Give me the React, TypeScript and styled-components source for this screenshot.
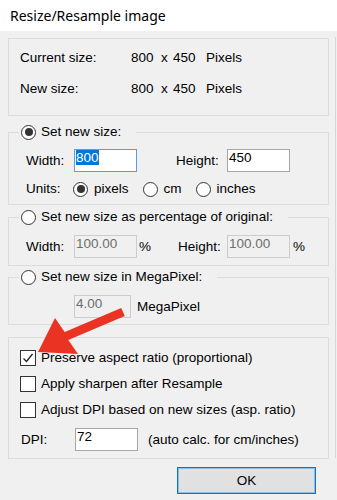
import React from "react";
import styled, { createGlobalStyle } from "styled-components";

const GlobalStyle = createGlobalStyle`
  html, body { margin: 0; padding: 0; background: #f0f0f0; }
  body {
    font-family: "Liberation Sans", Arial, sans-serif;
    font-size: 13.5px;
    color: #000;
  }
  * { box-sizing: border-box; }
`;

const Window = styled.div`
  position: relative;
  width: 337px;
  height: 500px;
  display: flex;
  flex-direction: column;
  background: #f0f0f0;
  overflow: hidden;
`;

const TitleBar = styled.div`
  height: 31px;
  flex: none;
  background: #fff;
  display: flex;
  align-items: center;
  padding-left: 10px;
  font-family: "Noto Sans", "Open Sans", sans-serif;
  font-size: 14px;
  color: #000;
`;

const Body = styled.div`
  display: flex;
  flex-direction: column;
  padding: 7px 0 0 8px;
`;

const Columns = styled.div`
  display: flex;
  align-items: stretch;
`;

const Stack = styled.div`
  width: 321px;
  display: flex;
  flex-direction: column;
`;

const Edge = styled.div`
  width: 1px;
  margin: -1px 0 1px 6px;
  background: #d6d6d6;
`;

const Box = styled.div<{ $mt?: number }>`
  border: 1px solid #dcdcdc;
  margin-top: ${(p) => p.$mt ?? 0}px;
`;

const InfoBox = styled(Box)`
  height: 78px;
  padding: 11px 0 0 11px;
  display: grid;
  grid-template-columns: 111px 30px 12px 33px auto;
  grid-auto-rows: 16px;
  row-gap: 15px;
  line-height: 16px;
  align-content: start;
`;

const Group = styled.fieldset<{ $mt: number }>`
  margin: ${(p) => p.$mt}px 0 0 0;
  padding: 0;
  border: 1px solid #dcdcdc;
  min-width: 0;
`;

const Legend = styled.legend`
  margin-left: 10px;
  padding: 0 15px 0 2px;
  height: 16px;
  line-height: 16px;
`;

const LegendInner = styled.span`
  display: flex;
  align-items: center;
  gap: 5px;
  height: 16px;
`;

const GroupContent = styled.div<{ $pb: number }>`
  padding: 0 0 ${(p) => p.$pb}px 17px;
`;

const FieldRow = styled.div<{ $mt: number }>`
  display: flex;
  align-items: center;
  height: 23px;
  margin-top: ${(p) => p.$mt}px;
  line-height: 16px;
`;

const OptionRow = styled.div<{ $mt: number }>`
  display: flex;
  align-items: center;
  height: 16px;
  line-height: 16px;
  margin-top: ${(p) => p.$mt}px;
`;

const Label = styled.span<{ $w?: number; $ml?: number }>`
  flex: none;
  width: ${(p) => (p.$w ? `${p.$w}px` : "auto")};
  margin-left: ${(p) => p.$ml ?? 0}px;
  white-space: nowrap;
`;

const TextField = styled.div<{ $w: number; $disabled?: boolean; $focused?: boolean }>`
  flex: none;
  width: ${(p) => p.$w}px;
  height: 23px;
  padding: 0 0 0 1px;
  line-height: 16px;
  border: 1px solid
    ${(p) => (p.$focused ? "#5b9ee0" : p.$disabled ? "#cccccc" : "#a6a6a6")};
  background: ${(p) => (p.$disabled ? "#f0f0f0" : "#ffffff")};
  color: ${(p) => (p.$disabled ? "#6d6d6d" : "#000")};
  white-space: nowrap;
`;

const Selected = styled.span`
  background: #0078d7;
  color: #fff;
`;

const Option = styled.label<{ $mr?: number }>`
  display: flex;
  align-items: center;
  gap: 6px;
  margin-right: ${(p) => p.$mr ?? 0}px;
`;

const Radio = styled.span<{ $checked?: boolean }>`
  flex: none;
  width: 15px;
  height: 15px;
  border-radius: 50%;
  border: 1px solid #333;
  background: #fff;
  display: flex;
  align-items: center;
  justify-content: center;
  &::after {
    content: "";
    display: ${(p) => (p.$checked ? "block" : "none")};
    width: 8px;
    height: 8px;
    border-radius: 50%;
    background: #333;
  }
`;

const CheckBox = styled.span`
  flex: none;
  width: 16px;
  height: 16px;
  border: 1px solid #333;
  background: #fff;
  display: flex;
  align-items: center;
  justify-content: center;
`;

const CheckRow = styled.label<{ $mt: number }>`
  display: flex;
  align-items: center;
  gap: 5px;
  height: 16px;
  line-height: 16px;
  margin-top: ${(p) => p.$mt}px;
`;

const OptionsBox = styled(Box)`
  padding: 12px 0 7px 11px;
`;

const Footer = styled.div`
  width: 321px;
  display: flex;
  justify-content: flex-end;
  padding-right: 13px;
  margin-top: 8px;
`;

const Button = styled.button`
  width: 139px;
  height: 27px;
  background: #e1e1e1;
  border: 1px solid #0078d7;
  box-shadow: inset 0 0 0 1px rgba(0, 120, 215, 0.35);
  font-family: "Liberation Sans", Arial, sans-serif;
  font-size: 13.5px;
  color: #000;
  padding: 0;
`;

const ArrowSvg = styled.svg`
  position: absolute;
  left: 30px;
  top: 300px;
  pointer-events: none;
`;

function Check({ checked }: { checked?: boolean }) {
  return (
    <CheckBox>
      {checked && (
        <svg width="14" height="14" viewBox="0 0 14 14">
          <polyline
            points="2.5,7.5 5.5,10.5 11.5,3"
            fill="none"
            stroke="#222"
            strokeWidth="1.3"
          />
        </svg>
      )}
    </CheckBox>
  );
}

export default function App() {
  return (
    <>
      <GlobalStyle />
      <Window>
        <TitleBar>Resize/Resample image</TitleBar>
        <Body>
          <Columns>
            <Stack>
              <InfoBox>
                <span>Current size:</span>
                <span>800</span>
                <span>x</span>
                <span>450</span>
                <span>Pixels</span>
                <span>New size:</span>
                <span>800</span>
                <span>x</span>
                <span>450</span>
                <span>Pixels</span>
              </InfoBox>

              <Group $mt={8}>
                <Legend>
                  <LegendInner>
                    <Radio $checked />
                    Set new size:
                  </LegendInner>
                </Legend>
                <GroupContent $pb={7}>
                  <FieldRow $mt={9}>
                    <Label $w={48}>Width:</Label>
                    <TextField $w={63} $focused>
                      <Selected>800</Selected>
                    </TextField>
                    <Label $w={51} $ml={39}>Height:</Label>
                    <TextField $w={63}>450</TextField>
                  </FieldRow>
                  <OptionRow $mt={9}>
                    <Label $w={47}>Units:</Label>
                    <Option $mr={14}>
                      <Radio $checked />
                      pixels
                    </Option>
                    <Option $mr={14}>
                      <Radio />
                      cm
                    </Option>
                    <Option>
                      <Radio />
                      inches
                    </Option>
                  </OptionRow>
                </GroupContent>
              </Group>

              <Group $mt={4}>
                <Legend>
                  <LegendInner>
                    <Radio />
                    Set new size as percentage of original:
                  </LegendInner>
                </Legend>
                <GroupContent $pb={7}>
                  <FieldRow $mt={10}>
                    <Label $w={48}>Width:</Label>
                    <TextField $w={63} $disabled>100.00</TextField>
                    <Label $ml={2}>%</Label>
                    <Label $w={49} $ml={27}>Height:</Label>
                    <TextField $w={63} $disabled>100.00</TextField>
                    <Label $ml={3}>%</Label>
                  </FieldRow>
                </GroupContent>
              </Group>

              <Group $mt={3}>
                <Legend>
                  <LegendInner>
                    <Radio />
                    Set new size in MegaPixel:
                  </LegendInner>
                </Legend>
                <GroupContent $pb={6}>
                  <FieldRow $mt={10}>
                    <Label $w={48} />
                    <TextField $w={57} $disabled>4.00</TextField>
                    <Label $ml={6}>MegaPixel</Label>
                  </FieldRow>
                </GroupContent>
              </Group>

              <OptionsBox $mt={12}>
                <CheckRow $mt={0}>
                  <Check checked />
                  Preserve aspect ratio (proportional)
                </CheckRow>
                <CheckRow $mt={10}>
                  <Check />
                  Apply sharpen after Resample
                </CheckRow>
                <CheckRow $mt={10}>
                  <Check />
                  Adjust DPI based on new sizes (asp. ratio)
                </CheckRow>
                <FieldRow $mt={10}>
                  <Label $w={54} $ml={1}>DPI:</Label>
                  <TextField $w={63}>72</TextField>
                  <Label $ml={10}>(auto calc. for cm/inches)</Label>
                </FieldRow>
              </OptionsBox>
            </Stack>
            <Edge />
          </Columns>
          <Footer>
            <Button>OK</Button>
          </Footer>
        </Body>
        <ArrowSvg width="100" height="65" viewBox="30 300 100 65">
          <polygon
            points="38,352 55,318 64.7,331.9 121.2,307.9 124.8,316.1 68.3,340.1 78,354"
            fill="#ea3323"
          />
        </ArrowSvg>
      </Window>
    </>
  );
}
